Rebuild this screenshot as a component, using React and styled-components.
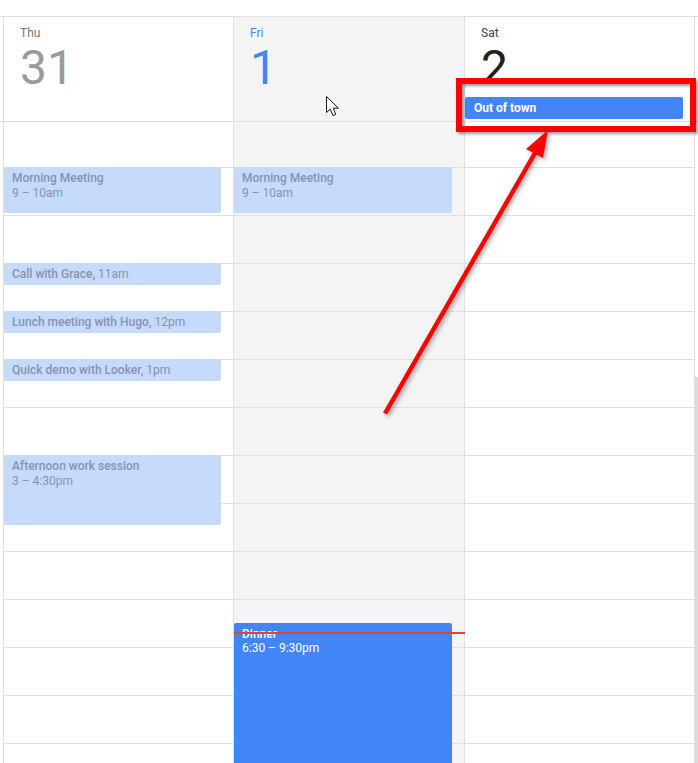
import styled, { createGlobalStyle } from "styled-components";

const GlobalStyle = createGlobalStyle`
  html, body {
    margin: 0;
    background: #fff;
  }
  body {
    font-family: Roboto, "Liberation Sans", sans-serif;
  }
`;

const LINE = "#e0e0e0";
const HOURS = 14;

const days = [
  {
    name: "Thu",
    date: "31",
    tone: "past",
    events: [
      { title: "Morning Meeting", time: "9 – 10am", top: 45, height: 46 },
      { title: "Call with Grace", time: "11am", top: 141, height: 22, inline: true },
      { title: "Lunch meeting with Hugo", time: "12pm", top: 189, height: 22, inline: true },
      { title: "Quick demo with Looker", time: "1pm", top: 237, height: 22, inline: true },
      { title: "Afternoon work session", time: "3 – 4:30pm", top: 333, height: 70 },
    ],
  },
  {
    name: "Fri",
    date: "1",
    tone: "today",
    events: [
      { title: "Morning Meeting", time: "9 – 10am", top: 45, height: 46 },
      { title: "Dinner", time: "6:30 – 9:30pm", top: 501, height: 160, solid: true },
    ],
  },
  {
    name: "Sat",
    date: "2",
    tone: "future",
    banner: "Out of town",
    events: [],
  },
];

const App = () => {
  return (
    <Page>
      <GlobalStyle />
      <HeaderRow>
        <Gutter />
        {days.map((day) => (
          <HeaderCell key={day.name} $today={day.tone === "today"}>
            <DayName $tone={day.tone}>{day.name}</DayName>
            <DayNumber $tone={day.tone}>{day.date}</DayNumber>
            {day.banner && <AllDayEvent>{day.banner}</AllDayEvent>}
          </HeaderCell>
        ))}
        <Gutter $edge />
      </HeaderRow>
      <Body>
        <Gutter />
        {days.map((day) => (
          <DayColumn key={day.name} $today={day.tone === "today"}>
            {Array.from({ length: HOURS }).map((_, i) => (
              <HourSlot key={i} $first={i === 0} />
            ))}
            {day.events.map((event) => (
              <EventCard
                key={event.title}
                $top={event.top}
                $height={event.height}
                $solid={event.solid}
              >
                {event.inline ? (
                  <EventLine>
                    <EventTitle>{event.title},</EventTitle> {event.time}
                  </EventLine>
                ) : (
                  <>
                    <EventLine>
                      <EventTitle>{event.title}</EventTitle>
                    </EventLine>
                    <EventLine>{event.time}</EventLine>
                  </>
                )}
              </EventCard>
            ))}
            {day.tone === "today" && <NowLine />}
          </DayColumn>
        ))}
        <Gutter $edge />
      </Body>

      <Scrollbar />

      <Cursor width="14" height="21" viewBox="0 0 14 21">
        <path
          d="M0.5 0.5V16.5L4.3 13.2L7 19.6L9.8 18.4L7.2 12.2H12.4Z"
          fill="#fff"
          stroke="#10141c"
          strokeWidth="1"
          strokeLinejoin="round"
        />
      </Cursor>

      <CalloutBox />
      <CalloutArrow width="698" height="763" viewBox="0 0 698 763">
        <line x1="385" y1="413.5" x2="535" y2="153" stroke="#f00" strokeWidth="4.5" />
        <polygon points="548,130 526,149 543,158" fill="#f00" />
      </CalloutArrow>
    </Page>
  );
};

export default App;

const Page = styled.div`
  position: relative;
  width: 698px;
  height: 763px;
  padding-top: 16px;
  box-sizing: border-box;
  overflow: hidden;
  background: #fff;
`;

const columns = "3px 230px 231px 230px 4px";

const HeaderRow = styled.div`
  display: grid;
  grid-template-columns: ${columns};
  height: 106px;
  box-sizing: border-box;
  border-top: 1px solid ${LINE};
  border-bottom: 1px solid ${LINE};
`;

const Gutter = styled.div`
  border-left: ${(p) => (p.$edge ? `1px solid ${LINE}` : "none")};
`;

const HeaderCell = styled.div`
  display: flex;
  flex-direction: column;
  border-left: 1px solid ${LINE};
  padding-top: 8px;
  background: ${(p) => (p.$today ? "#f4f4f4" : "#fff")};
`;

const toneColor = {
  past: "#9a9a9a",
  today: "#4285f4",
  future: "#212121",
};

const DayName = styled.div`
  margin-left: 16px;
  font-size: 12px;
  line-height: 16px;
  color: ${(p) => (p.$tone === "past" ? "#757575" : p.$tone === "future" ? "#424242" : toneColor[p.$tone])};
`;

const DayNumber = styled.div`
  margin: 3px 0 0 16px;
  font-size: 48px;
  line-height: 48px;
  color: ${(p) => toneColor[p.$tone]};
`;

const AllDayEvent = styled.div`
  margin-top: auto;
  margin-bottom: 2px;
  width: 218px;
  height: 22px;
  box-sizing: border-box;
  padding-left: 9px;
  border-radius: 2px;
  background: #4285f4;
  color: #fff;
  font-size: 12px;
  font-weight: 700;
  line-height: 23px;
`;

const Body = styled.div`
  display: grid;
  grid-template-columns: ${columns};
`;

const DayColumn = styled.div`
  position: relative;
  border-left: 1px solid ${LINE};
  background: ${(p) => (p.$today ? "#f4f4f4" : "#fff")};
`;

const HourSlot = styled.div`
  height: ${(p) => (p.$first ? "46px" : "48px")};
  box-sizing: border-box;
  border-bottom: 1px solid ${LINE};
`;

const EventCard = styled.div`
  position: absolute;
  left: 0;
  right: 12px;
  top: ${(p) => p.$top}px;
  height: ${(p) => p.$height}px;
  box-sizing: border-box;
  padding: 4px 8px 0;
  border-radius: 2px;
  overflow: hidden;
  background: ${(p) => (p.$solid ? "#4285f4" : "#c6dafc")};
  color: ${(p) => (p.$solid ? "#fff" : "#8793b0")};
  font-size: 12px;
  line-height: ${(p) => (p.$solid ? "14px" : "15px")};
`;

const EventLine = styled.div`
  white-space: nowrap;
`;

const EventTitle = styled.span`
  font-weight: 500;
`;

const NowLine = styled.div`
  position: absolute;
  z-index: 1;
  left: 0;
  right: -1px;
  top: 510px;
  height: 2px;
  background: #db4437;
`;

const Scrollbar = styled.div`
  position: absolute;
  right: 0;
  top: 377px;
  bottom: 0;
  width: 4px;
  background: #dcdcdc;
`;

const Cursor = styled.svg`
  position: absolute;
  left: 326px;
  top: 96px;
`;

const CalloutBox = styled.div`
  position: absolute;
  left: 456px;
  top: 78px;
  width: 240px;
  height: 54px;
  box-sizing: border-box;
  border: 6px solid #f00;
  box-shadow: 2px 2px 3px rgba(0, 0, 0, 0.4), inset 2px 2px 3px rgba(0, 0, 0, 0.4);
`;

const CalloutArrow = styled.svg`
  position: absolute;
  left: 0;
  top: 0;
  pointer-events: none;
  filter: drop-shadow(2px 2px 2px rgba(0, 0, 0, 0.35));
`;
